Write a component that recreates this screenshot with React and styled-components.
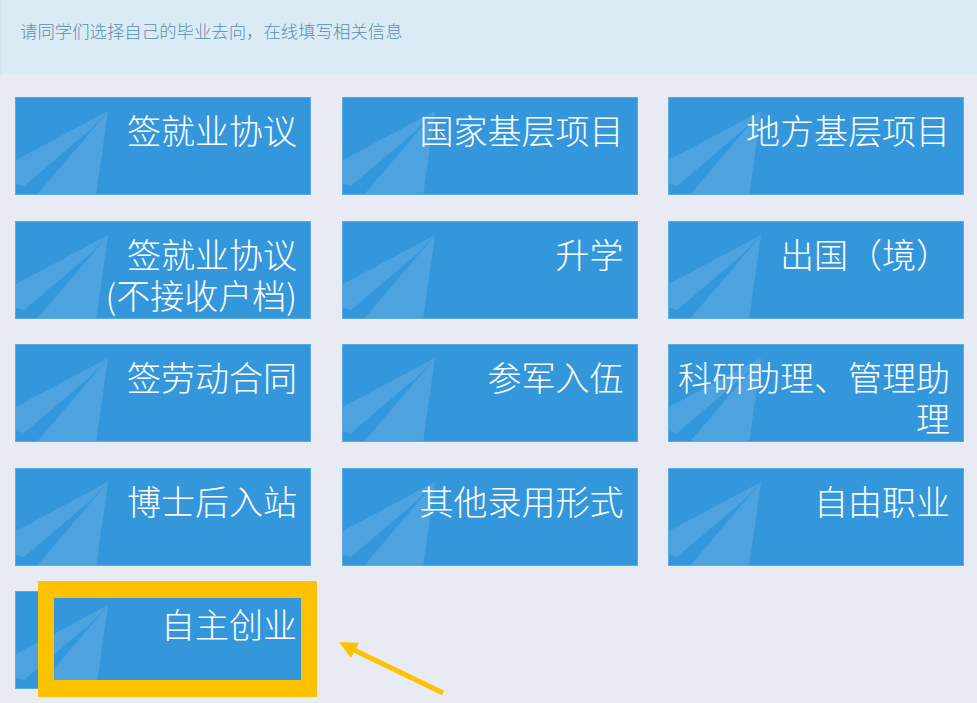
import React from 'react';
import styled, { createGlobalStyle } from 'styled-components';

const GlobalStyle = createGlobalStyle`
    html, body {
        margin: 0;
        padding: 0;
        background: #e8ebf3;
        font-family: "Noto Sans CJK SC", "Noto Sans", sans-serif;
    }
`;

const options = [
    ['签就业协议'],
    ['国家基层项目'],
    ['地方基层项目'],
    ['签就业协议', '(不接收户档)'],
    ['升学'],
    ['出国（境）'],
    ['签劳动合同'],
    ['参军入伍'],
    ['科研助理、管理助理'],
    ['博士后入站'],
    ['其他录用形式'],
    ['自由职业'],
    ['自主创业'],
];

const Page = styled.div`
    position: relative;
    width: 977px;
    height: 703px;
    overflow: hidden;
`;

const Notice = styled.div`
    height: 75px;
    box-sizing: border-box;
    padding: 21px 18px 0;
    background: #d9ecf6;
    border-left: 2px solid #d2e6f1;
    color: #5f8cac;
    font-size: 17.4px;
    font-weight: 300;
    line-height: 20px;
`;

const Grid = styled.div`
    display: grid;
    grid-template-columns: repeat(3, 296px);
    grid-auto-rows: 98px;
    column-gap: 30.5px;
    row-gap: 25.5px;
    padding: 22px 0 0 15px;
`;

const Tile = styled.div`
    position: relative;
    overflow: hidden;
    box-sizing: border-box;
    background: #3597db;
    border: 1px solid #5aaae2;
    padding: 11px 13px 0 8px;
    color: #fff;
    font-size: 34px;
    font-weight: 300;
    line-height: 41px;
    text-align: right;
    cursor: pointer;
`;

const Plane = styled.svg`
    position: absolute;
    left: 0;
    top: 0;
    width: 296px;
    height: 98px;
`;

const Label = styled.div`
    position: relative;
`;

const Highlight = styled.div`
    position: absolute;
    left: 38px;
    top: 581px;
    width: 279px;
    height: 116px;
    box-sizing: border-box;
    border: 16px solid #fec200;
    border-bottom-width: 17px;
    border-top-width: 17px;
`;

const Arrow = styled.svg`
    position: absolute;
    left: 330px;
    top: 630px;
`;

const PlaneMark = () => (
    <Plane viewBox="0 0 296 98">
        <polygon points="0,62 92,13 75,31 8,88 0,86" fill="#fff" fillOpacity="0.12" />
        <polygon points="92,13 80,98 20,98 77,31" fill="#fff" fillOpacity="0.12" />
    </Plane>
);

const App = () => {
    return (
        <Page>
            <GlobalStyle />
            <Notice>请同学们选择自己的毕业去向，在线填写相关信息</Notice>
            <Grid>
                {options.map((lines, i) => (
                    <Tile key={i}>
                        <PlaneMark />
                        <Label>
                            {lines.map((l, j) => (
                                <div key={j}>{l}</div>
                            ))}
                        </Label>
                    </Tile>
                ))}
            </Grid>
            <Highlight />
            <Arrow width="120" height="70" viewBox="0 0 120 70">
                <line x1="113" y1="63" x2="20" y2="18" stroke="#fec200" strokeWidth="5" />
                <polygon points="9,12 29,13 21,28" fill="#fec200" />
            </Arrow>
        </Page>
    );
};

export default App;
